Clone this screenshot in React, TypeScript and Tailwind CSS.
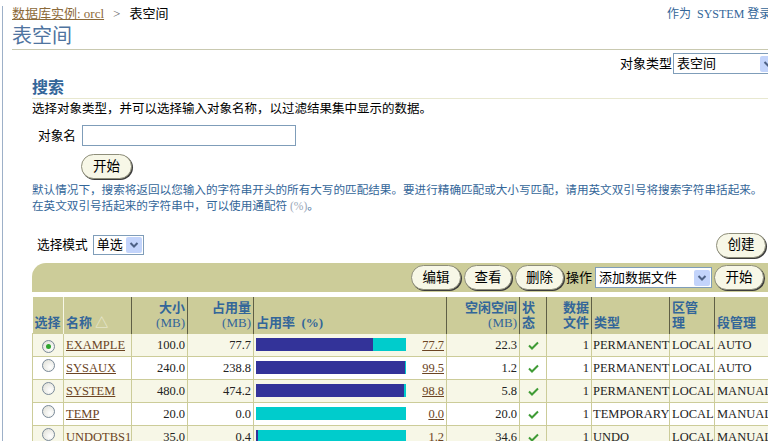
import React from 'react'

type Row = {
  name: string
  size: string
  used: string
  pct: number
  free: string
  files: number
  type: string
  ext: string
  seg: string
}

const rows: Row[] = [
  { name: 'EXAMPLE', size: '100.0', used: '77.7', pct: 77.7, free: '22.3', files: 1, type: 'PERMANENT', ext: 'LOCAL', seg: 'AUTO' },
  { name: 'SYSAUX', size: '240.0', used: '238.8', pct: 99.5, free: '1.2', files: 1, type: 'PERMANENT', ext: 'LOCAL', seg: 'AUTO' },
  { name: 'SYSTEM', size: '480.0', used: '474.2', pct: 98.8, free: '5.8', files: 1, type: 'PERMANENT', ext: 'LOCAL', seg: 'MANUAL' },
  { name: 'TEMP', size: '20.0', used: '0.0', pct: 0.0, free: '20.0', files: 1, type: 'TEMPORARY', ext: 'LOCAL', seg: 'MANUAL' },
  { name: 'UNDOTBS1', size: '35.0', used: '0.4', pct: 1.2, free: '34.6', files: 1, type: 'UNDO', ext: 'LOCAL', seg: 'MANUAL' },
]

function Btn({ children, className = '' }: { children: React.ReactNode; className?: string }) {
  return (
    <div
      className={`flex h-[25px] shrink-0 items-center justify-center rounded-full border border-[#8e8e7a] bg-[#f7f7e7] text-[13.5px] leading-[16px] text-black shadow-[1px_1px_0_#3c3c3c] ${className}`}
    >
      {children}
    </div>
  )
}

function Select({ value, className = '' }: { value: string; className?: string }) {
  return (
    <div className={`flex shrink-0 items-center border border-[#7f9db9] bg-white ${className}`}>
      <span className="flex-1 whitespace-nowrap pl-[3px] text-[13px] leading-[16px]">{value}</span>
      <span className="mr-[1px] flex h-[16px] w-[16px] items-center justify-center rounded-[2px] bg-[#c3d4fb]">
        <svg width="10" height="8" viewBox="0 0 10 8">
          <polyline points="1.5,2 5,5.5 8.5,2" fill="none" stroke="#4d6185" strokeWidth="2" />
        </svg>
      </span>
    </div>
  )
}

function Radio({ on }: { on?: boolean }) {
  return (
    <span className="inline-flex h-[13px] w-[13px] items-center justify-center rounded-full border border-[#7a8a99] bg-[radial-gradient(circle_at_65%_65%,#ffffff,#dcdcd2)]">
      {on && <span className="h-[5px] w-[5px] rounded-full bg-[#2fa52f]" />}
    </span>
  )
}

export default function App() {
  const th = 'border-r border-[#5f5f45] bg-[#cccc99] px-[2px] pb-[3px] align-bottom text-[13px] font-bold leading-[15px] text-[#336699]'
  const td = 'h-[23px] border border-[#cccc99] px-[2px] text-[12.5px] leading-[16px] text-[#222] whitespace-nowrap'

  return (
    <div className="h-[441px] w-[768px] overflow-hidden bg-white font-['Liberation_Serif','Noto_Sans_CJK_SC',serif] text-black">
      <div className="ml-[2px] h-full border-l border-[#9db0c8] pl-[9px]">
        {/* breadcrumb */}
        <div className="mt-[6px] flex h-[16px] items-center justify-between text-[13px] leading-[16px]">
          <div className="flex items-center whitespace-nowrap">
            <a className="text-[#8c6a3a] underline">数据库实例: orcl</a>
            <span className="mx-[9px] text-[#666]">&gt;</span>
            <span>表空间</span>
          </div>
          <div className="w-[101px] shrink-0 whitespace-nowrap text-[12px] text-[#336699]">
            作为&nbsp; SYSTEM 登录
          </div>
        </div>

        {/* title */}
        <div className="flex h-[28px] items-center border-b border-[#c9c9b0] text-[20px] leading-[24px] text-[#4f74a0]">
          表空间
        </div>

        <div className="mt-[3px] flex h-[21px] items-center justify-end">
          <span className="mr-[1px] text-[13px] leading-[16px]">对象类型</span>
          <Select value="表空间" className="-mr-[10px] h-[21px] w-[105px]" />
        </div>

        <div className="pl-[20px]">
          <div className="mt-[4px] h-[21px] border-b border-[#e8e8d0] text-[16px] font-bold leading-[20px] text-[#336699]">
            搜索
          </div>
          <div className="mt-[2px] whitespace-nowrap text-[12.5px] leading-[16px]">
            选择对象类型，并可以选择输入对象名称，以过滤结果集中显示的数据。
          </div>

          <div className="mt-[8px] flex h-[21px] items-center">
            <span className="w-[50px] pl-[6px] text-[12.7px] leading-[16px]">对象名</span>
            <div className="h-[21px] w-[214px] border border-[#7f9db9] bg-white" />
          </div>

          <Btn className="ml-[49px] mt-[8px] w-[51px]">开始</Btn>

          <div className="mt-[4px] whitespace-nowrap text-[11.6px] leading-[16px] text-[#336699]">
            默认情况下，搜索将返回以您输入的字符串开头的所有大写的匹配结果。要进行精确匹配或大小写匹配，请用英文双引号将搜索字符串括起来。
            <br />
            在英文双引号括起来的字符串中，可以使用通配符 <span className="text-[#9aa8b8]">(%)</span>。
          </div>

          <div className="mt-[17px] flex h-[26px] items-center justify-between">
            <div className="flex items-center pl-[5px]">
              <span className="mr-[5px] text-[12.7px] leading-[16px]">选择模式</span>
              <Select value="单选" className="h-[20px] w-[51px]" />
            </div>
            <Btn className="mr-[2px] w-[50px]">创建</Btn>
          </div>

          {/* toolbar */}
          <div className="mt-[5px] flex h-[29px] items-center justify-end rounded-tl-[14px] bg-[#cccc99] pr-[4px]">
            <Btn className="w-[50px]">编辑</Btn>
            <Btn className="ml-[3px] w-[48px]">查看</Btn>
            <Btn className="ml-[3px] w-[49px]">删除</Btn>
            <span className="ml-[2px] text-[13px] leading-[16px]">操作</span>
            <Select value="添加数据文件" className="ml-[3px] h-[21px] w-[117px]" />
            <Btn className="ml-[2px] w-[50px]">开始</Btn>
          </div>

          <table className="mt-[5px] w-[762px] table-fixed border-collapse">
            <colgroup>
              <col className="w-[31px]" />
              <col className="w-[68px]" />
              <col className="w-[56px]" />
              <col className="w-[66px]" />
              <col className="w-[193px]" />
              <col className="w-[73px]" />
              <col className="w-[27px]" />
              <col className="w-[45px]" />
              <col className="w-[78px]" />
              <col className="w-[45px]" />
              <col className="w-[80px]" />
            </colgroup>
            <thead>
              <tr className="h-[36px] border-b border-[#5f5f45]">
                <th className={`${th} border-r-[#f7f7e7] text-left`}>选择</th>
                <th className={`${th} text-left`}>
                  名称 <span className="font-normal text-[#eeeedd]">△</span>
                </th>
                <th className={`${th} text-right`}>
                  大小
                  <br />
                  <span className="font-normal">(MB)</span>
                </th>
                <th className={`${th} text-right`}>
                  占用量
                  <br />
                  <span className="font-normal">(MB)</span>
                </th>
                <th className={`${th} text-left`}>占用率&nbsp; (%)</th>
                <th className={`${th} text-right`}>
                  空闲空间
                  <br />
                  <span className="font-normal">(MB)</span>
                </th>
                <th className={`${th} text-left`}>
                  状<br />态
                </th>
                <th className={`${th} text-right`}>
                  数据
                  <br />
                  文件
                </th>
                <th className={`${th} text-left`}>类型</th>
                <th className={`${th} text-left`}>
                  区管
                  <br />理
                </th>
                <th className={`${th} text-left`}>段管理</th>
              </tr>
            </thead>
            <tbody>
              {rows.map((r, i) => (
                <tr key={r.name} className={i % 2 === 0 ? 'bg-[#f7f7e7]' : 'bg-white'}>
                  <td className={`${td} text-center`}>
                    <Radio on={i === 0} />
                  </td>
                  <td className={td}>
                    <a className="text-[#6b4423] underline">{r.name}</a>
                  </td>
                  <td className={`${td} text-right`}>{r.size}</td>
                  <td className={`${td} text-right`}>{r.used}</td>
                  <td className={td}>
                    <div className="flex items-center justify-between">
                      <div className="h-[13px] w-[150px] bg-[#00cccc]">
                        <div className="h-full bg-[#333399]" style={{ width: `${(r.pct / 100) * 150}px` }} />
                      </div>
                      <a className="text-[#6b4423] underline">{r.pct.toFixed(1)}</a>
                    </div>
                  </td>
                  <td className={`${td} text-right`}>{r.free}</td>
                  <td className={`${td} text-center`}>
                    <svg width="11" height="9" viewBox="0 0 11 9" className="inline-block">
                      <polyline points="1,4.5 4,7.5 10,1.5" fill="none" stroke="#3f9b35" strokeWidth="2" />
                    </svg>
                  </td>
                  <td className={`${td} text-right`}>{r.files}</td>
                  <td className={`${td} pl-[1px]`}>{r.type}</td>
                  <td className={td}>{r.ext}</td>
                  <td className={td}>{r.seg}</td>
                </tr>
              ))}
            </tbody>
          </table>
        </div>
      </div>
    </div>
  )
}
